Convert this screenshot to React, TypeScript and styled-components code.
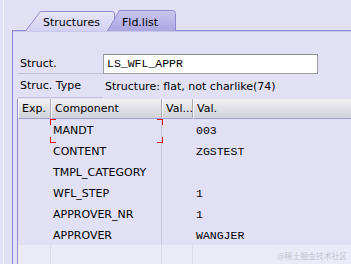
import styled, { createGlobalStyle } from 'styled-components';

const GlobalStyle = createGlobalStyle`
  html, body {
    margin: 0;
    padding: 0;
    background: #e1e0f5;
    overflow: hidden;
  }
  body {
    font-family: "DejaVu Sans", Verdana, sans-serif;
    font-size: 11px;
    color: #000;
  }
`;

const Frame = styled.div`
  position: relative;
  height: 264px;
  margin-left: 3px;
  border-left: 1px solid #f3f3fc;
  background: #e1e0f5;
  overflow: hidden;
`;

const TabStrip = styled.div`
  display: flex;
  align-items: flex-end;
  height: 30px;
  padding-left: 21px;
`;

const Tab = styled.div<{ $active?: boolean; $w: number; $h: number; $pad: number }>`
  position: relative;
  width: ${(p) => p.$w}px;
  height: ${(p) => p.$h}px;
  margin-left: ${(p) => (p.$active ? '-8px' : '0')};
  z-index: ${(p) => (p.$active ? 2 : 1)};
  display: flex;
  align-items: center;
  padding-left: ${(p) => p.$pad}px;
  padding-top: ${(p) => (p.$active ? 5 : 4)}px;
  box-sizing: border-box;
  font-size: 11px;
  svg {
    position: absolute;
    left: 0;
    top: 0;
    z-index: -1;
  }
  span {
    position: relative;
  }
`;

const Panel = styled.div`
  margin-left: 8px;
  border-left: 1px solid #8f8bd0;
  border-top: 1px solid #8f8bd0;
  box-shadow: inset 0 1px 0 #c9c6ee;
  padding: 23px 0 0 7px;
  height: 240px;
`;

const FormRow = styled.div<{ $h: number }>`
  display: grid;
  grid-template-columns: 83px 1fr;
  height: ${(p) => p.$h}px;
  align-items: stretch;
`;

const Label = styled.div`
  display: flex;
  align-items: center;
  margin-left: -2px;
  padding-left: 2px;
  border-bottom: 1px solid #c3c1d8;
`;

const InputBox = styled.div`
  width: 215px;
  height: 20px;
  box-sizing: border-box;
  border: 1px solid #9d9d9d;
  border-top-color: #8a8a8a;
  background: #fff;
  font-family: "Liberation Mono", "Courier New", monospace;
  font-size: 11.5px;
  line-height: 18px;
  padding-left: 3px;
`;

const Value = styled.div`
  display: flex;
  align-items: center;
  padding-left: 2px;
  padding-top: 1px;
`;

const Table = styled.div`
  margin: 1px 0 0 -3px;
  border-left: 1px solid #8f8bd0;
  display: grid;
  grid-template-columns: 33px 111px 31px 1fr;
`;

const HeadCell = styled.div<{ $last?: boolean }>`
  height: 20px;
  box-sizing: border-box;
  display: flex;
  align-items: center;
  padding-left: 3px;
  background: linear-gradient(#f1f1f5, #dcdce3 60%, #d2d2da);
  border-left: 1px solid #fbfbfd;
  border-right: ${(p) => (p.$last ? 'none' : '1px solid #a9a9b4')};
  border-bottom: 1px solid #a19dcf;
  white-space: nowrap;
  overflow: hidden;
`;

const Cell = styled.div<{ $mono?: boolean; $line?: boolean; $pad?: number }>`
  position: relative;
  height: 21px;
  display: flex;
  align-items: center;
  padding-left: ${(p) => p.$pad ?? 2}px;
  padding-top: 1px;
  box-sizing: border-box;
  font-family: ${(p) => (p.$mono ? '"Liberation Mono", "Courier New", monospace' : 'inherit')};
  font-size: ${(p) => (p.$mono ? '11.5px' : '11px')};
  border-right: ${(p) => (p.$line ? '1px solid #c9c8dc' : 'none')};
`;

const Filler = styled.div<{ $line?: boolean }>`
  height: 30px;
  background: #ebebf8;
  border-right: ${(p) => (p.$line ? '1px solid #dcdcea' : 'none')};
`;

const Focus = styled.div`
  position: absolute;
  left: -1px;
  top: 0;
  width: 113px;
  height: 24px;
  z-index: 5;
  pointer-events: none;
`;

const Corner = styled.span<{ $right?: boolean; $bottom?: boolean }>`
  position: absolute;
  width: 5px;
  height: 5px;
  ${(p) => (p.$right ? 'right: 0;' : 'left: 0;')}
  ${(p) => (p.$bottom ? 'bottom: 0;' : 'top: 0;')}
  border-color: #e01010;
  border-style: solid;
  border-width: ${(p) =>
    `${p.$bottom ? 0 : 1}px ${p.$right ? 1 : 0}px ${p.$bottom ? 1 : 0}px ${p.$right ? 0 : 1}px`};
`;

const Watermark = styled.div`
  position: absolute;
  right: 4px;
  bottom: 3px;
  font-family: "Noto Sans CJK SC", sans-serif;
  font-size: 8px;
  color: #c4c4cf;
  letter-spacing: -0.2px;
`;

const rows = [
  { name: 'MANDT', val: '003' },
  { name: 'CONTENT', val: 'ZGSTEST' },
  { name: 'TMPL_CATEGORY', val: '' },
  { name: 'WFL_STEP', val: '1' },
  { name: 'APPROVER_NR', val: '1' },
  { name: 'APPROVER', val: 'WANGJER' },
];

function App() {
  return (
    <>
      <GlobalStyle />
      <Frame>
        <TabStrip>
          <Tab $w={90} $h={19} $pad={18}>
            <svg width="90" height="20" viewBox="0 0 90 20">
              <defs>
                <linearGradient id="tabA" x1="0" y1="0" x2="0" y2="1">
                  <stop offset="0" stopColor="#e6e5f8" />
                  <stop offset="1" stopColor="#d3d1f0" />
                </linearGradient>
              </defs>
              <path d="M0.5 20 L15.5 0.5 H87 Q89.5 0.5 89.5 3 V20" fill="url(#tabA)" stroke="#918dcf" />
            </svg>
            <span>Structures</span>
          </Tab>
          <Tab $active $w={69} $h={20} $pad={15}>
            <svg width="69" height="21" viewBox="0 0 69 21">
              <defs>
                <linearGradient id="tabB" x1="0" y1="0" x2="0" y2="1">
                  <stop offset="0" stopColor="#c9c6ef" />
                  <stop offset="1" stopColor="#aba7e0" />
                </linearGradient>
              </defs>
              <path d="M0.5 21 L12.5 0.5 H65.5 Q68.5 0.5 68.5 3.5 V21" fill="url(#tabB)" stroke="#8d89cd" />
            </svg>
            <span>Fld.list</span>
          </Tab>
        </TabStrip>
        <Panel>
          <FormRow $h={20}>
            <Label>Struct.</Label>
            <InputBox>LS_WFL_APPR</InputBox>
          </FormRow>
          <FormRow $h={24}>
            <Label>Struc. Type</Label>
            <Value>Structure: flat, not charlike(74)</Value>
          </FormRow>
          <Table>
            <HeadCell>Exp.</HeadCell>
            <HeadCell>Component</HeadCell>
            <HeadCell>Val...</HeadCell>
            <HeadCell $last>Val.</HeadCell>
            {rows.map((r, i) => [
              <Cell key={`e${i}`} />,
              <Cell key={`c${i}`} $line>
                {i === 0 && (
                  <Focus>
                    <Corner />
                    <Corner $right />
                    <Corner $bottom />
                    <Corner $right $bottom />
                  </Focus>
                )}
                {r.name}
              </Cell>,
              <Cell key={`v${i}`} />,
              <Cell key={`x${i}`} $mono $pad={3}>
                {r.val}
              </Cell>,
            ])}
            <Filler $line />
            <Filler $line />
            <Filler $line />
            <Filler />
          </Table>
        </Panel>
        <Watermark>@稀土掘金技术社区</Watermark>
      </Frame>
    </>
  );
}

export default App;
